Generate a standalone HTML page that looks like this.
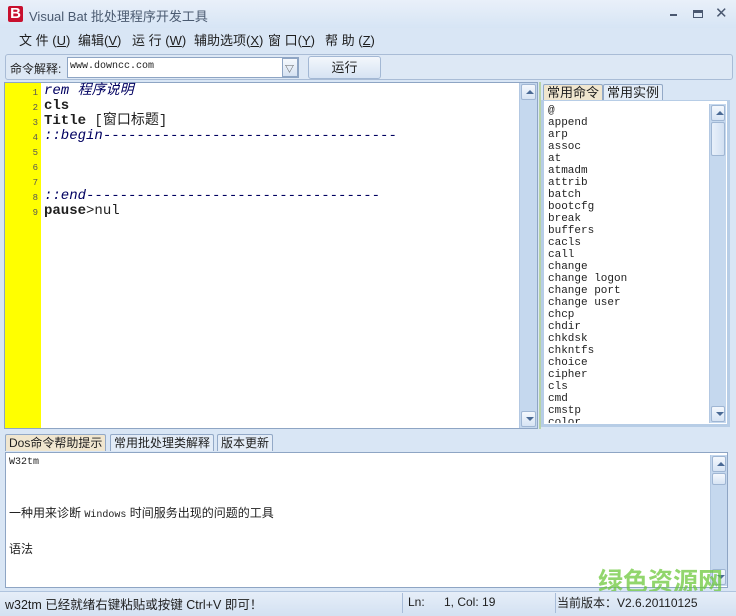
<!DOCTYPE html>
<html><head><meta charset="utf-8"><style>
*{margin:0;padding:0;box-sizing:border-box}
body{width:736px;height:616px;overflow:hidden;background:#d9e6f5;font-family:"Liberation Sans","Noto Sans CJK SC",sans-serif;font-size:12px;color:#1e1e1e;position:relative}
.a{position:absolute;white-space:nowrap}
.mono{font-family:"Liberation Mono","Noto Sans CJK SC",monospace}
.sb{position:absolute;background:#c5d8ee;border-left:1px solid #b3c8e2}
.sb .btn{position:absolute;left:1px;right:1px;height:16px;background:linear-gradient(#f4f8fd,#d7e4f4);border:1px solid #9fb6d3;border-radius:2px}
.tri{position:absolute;left:4px;width:0;height:0;border-left:4px solid transparent;border-right:4px solid transparent}
.tab{position:absolute;height:17px;border:1px solid #93a9c7;border-bottom:none;background:#e3ecf7;font-size:13px;padding:0 3px;line-height:16px;border-radius:2px 2px 0 0}
</style></head><body>
<div class="a" style="left:0;top:0;width:736px;height:28px;background:linear-gradient(#e9f0f9,#d7e5f5)"></div>
<div class="a" style="left:8px;top:6px;width:15px;height:16px;background:#c8102e;color:#fff;font-weight:bold;font-size:15px;line-height:16px;text-align:center;border-radius:2px">B</div>
<div class="a" style="left:29px;top:6px;font-size:13px;color:#4a5a70">Visual Bat 批处理程序开发工具</div>
<div class="a" style="left:670px;top:14px;width:7px;height:2px;background:#4a5870"></div>
<div class="a" style="left:693px;top:10px;width:10px;height:8px;border:1px solid #4a5870;border-top-width:3px"></div>
<div class="a" style="left:715px;top:4px;font-size:15px;color:#4a5870">✕</div>
<div class="a" style="left:19px;top:30px;font-size:13px">文 件 (<u>U</u>)</div>
<div class="a" style="left:78px;top:30px;font-size:13px">编辑(<u>V</u>)</div>
<div class="a" style="left:132px;top:30px;font-size:13px">运 行 (<u>W</u>)</div>
<div class="a" style="left:194px;top:30px;font-size:13px">辅助选项(<u>X</u>)</div>
<div class="a" style="left:268px;top:30px;font-size:13px">窗 口(<u>Y</u>)</div>
<div class="a" style="left:325px;top:30px;font-size:13px">帮 助 (<u>Z</u>)</div>
<div class="a" style="left:5px;top:54px;width:728px;height:26px;border:1px solid #a9bcd6;border-radius:3px;background:#dde8f5"></div>
<div class="a" style="left:10px;top:60px;font-size:12px">命令解释:</div>
<div class="a" style="left:67px;top:57px;width:232px;height:21px;background:#fff;border:1px solid #8ea5c4"></div>
<div class="a mono" style="left:70px;top:61px;font-size:10px">www.downcc.com</div>
<div class="a" style="left:282px;top:58px;width:16px;height:19px;background:linear-gradient(#f6f9fd,#d5e2f2);border:1px solid #8ea5c4"></div>
<div class="a" style="left:285px;top:62px;font-size:9px;color:#333">▽</div>
<div class="a" style="left:308px;top:56px;width:73px;height:23px;background:linear-gradient(#f3f7fc,#d6e3f3);border:1px solid #a3b8d4;border-radius:3px;text-align:center;line-height:21px;font-size:13px">运行</div>

<div class="a" style="left:4px;top:82px;width:534px;height:347px;background:#fff;border:1px solid #8ea5c4"></div>
<div class="a" style="left:5px;top:83px;width:36px;height:345px;background:#ffff00"></div>
<div class="a mono" style="left:5px;top:86px;width:36px;font-size:9px;line-height:15px;text-align:right;padding-right:3px;color:#555">1<br>2<br>3<br>4<br>5<br>6<br>7<br>8<br>9</div>
<div class="a" style="left:44px;top:84px;font-family:'Liberation Mono','Noto Sans CJK SC',monospace;font-size:14px;line-height:15px">
<div style="font-style:italic;color:#000060">rem 程序说明</div>
<div style="font-weight:bold">cls</div>
<div><b>Title</b> [窗口标题]</div>
<div style="font-style:italic;color:#000060">::begin<span style="font-style:normal">-----------------------------------</span></div>
<div>&nbsp;</div><div>&nbsp;</div><div>&nbsp;</div>
<div style="font-style:italic;color:#000060">::end<span style="font-style:normal">-----------------------------------</span></div>
<div><b>pause</b>&gt;nul</div></div>
<div class="sb" style="left:519px;top:83px;width:18px;height:345px"><div class="btn" style="top:1px"><div class="tri" style="top:5px;border-bottom:4px solid #4a6a95"></div></div><div class="btn" style="bottom:1px"><div class="tri" style="top:5px;border-top:4px solid #4a6a95"></div></div></div>

<div class="a" style="left:539px;top:82px;width:194px;height:347px;background:#d9e6f5;border-left:2px solid #b7d3a8"></div>
<div class="tab" style="left:543px;top:84px;background:#f0e6cf">常用命令</div>
<div class="tab" style="left:603px;top:84px">常用实例</div>
<div class="a" style="left:541px;top:100px;width:189px;height:327px;background:#fff;border:1px solid #8ea5c4;border-width:1px 3px 3px 3px;border-color:#b7cde6"></div>
<div class="a mono" style="left:548px;top:105px;font-size:11px;line-height:12px;height:318px;overflow:hidden">@<br>append<br>arp<br>assoc<br>at<br>atmadm<br>attrib<br>batch<br>bootcfg<br>break<br>buffers<br>cacls<br>call<br>change<br>change logon<br>change port<br>change user<br>chcp<br>chdir<br>chkdsk<br>chkntfs<br>choice<br>cipher<br>cls<br>cmd<br>cmstp<br>color</div>
<div class="sb" style="left:709px;top:104px;width:17px;height:319px"><div class="btn" style="top:1px"><div class="tri" style="top:5px;border-bottom:4px solid #4a6a95"></div></div><div class="btn" style="top:18px;height:34px;background:linear-gradient(90deg,#e8f0fa,#d2e0f2)"></div><div class="btn" style="bottom:1px"><div class="tri" style="top:5px;border-top:4px solid #4a6a95"></div></div></div>

<div class="tab" style="left:5px;top:434px;background:#f0e6cf;font-size:12px">Dos命令帮助提示</div>
<div class="tab" style="left:110px;top:434px;font-size:12px">常用批处理类解释</div>
<div class="tab" style="left:217px;top:434px;font-size:12px">版本更新</div>
<div class="a" style="left:5px;top:452px;width:723px;height:136px;background:#fff;border:1px solid #8ea5c4"></div>
<div class="a mono" style="left:9px;top:457px;font-size:10px">W32tm</div>
<div class="a" style="left:9px;top:504px;font-size:12px">一种用来诊断 <span class="mono" style="font-size:10px">Windows</span> 时间服务出现的问题的工具</div>
<div class="a" style="left:9px;top:540px;font-size:12px">语法</div>
<div class="sb" style="left:710px;top:455px;width:17px;height:131px"><div class="btn" style="top:1px"><div class="tri" style="top:5px;border-bottom:4px solid #4a6a95"></div></div><div class="btn" style="top:18px;height:12px"></div><div class="btn" style="bottom:1px"><div class="tri" style="top:5px;border-top:4px solid #4a6a95"></div></div></div>
<div class="a" style="left:598px;top:562px;font-size:25px;font-weight:bold;color:rgba(110,200,60,0.75)">绿色资源网</div>

<div class="a" style="left:0;top:591px;width:736px;height:25px;background:linear-gradient(#e6eef8,#d3e1f2);border-top:1px solid #b0c4de"></div>
<div class="a" style="left:5px;top:594px;font-size:12.5px">w32tm 已经就绪右键粘贴或按键 Ctrl+V 即可！</div>
<div class="a" style="left:402px;top:593px;width:1px;height:20px;background:#a8bcd8"></div>
<div class="a" style="left:408px;top:595px;font-size:12px">Ln:</div>
<div class="a" style="left:444px;top:595px;font-size:12px">1, Col: 19</div>
<div class="a" style="left:555px;top:593px;width:1px;height:20px;background:#a8bcd8"></div>
<div class="a" style="left:557px;top:594px;font-size:12px">当前版本：V2.6.20110125</div>
</body></html>
